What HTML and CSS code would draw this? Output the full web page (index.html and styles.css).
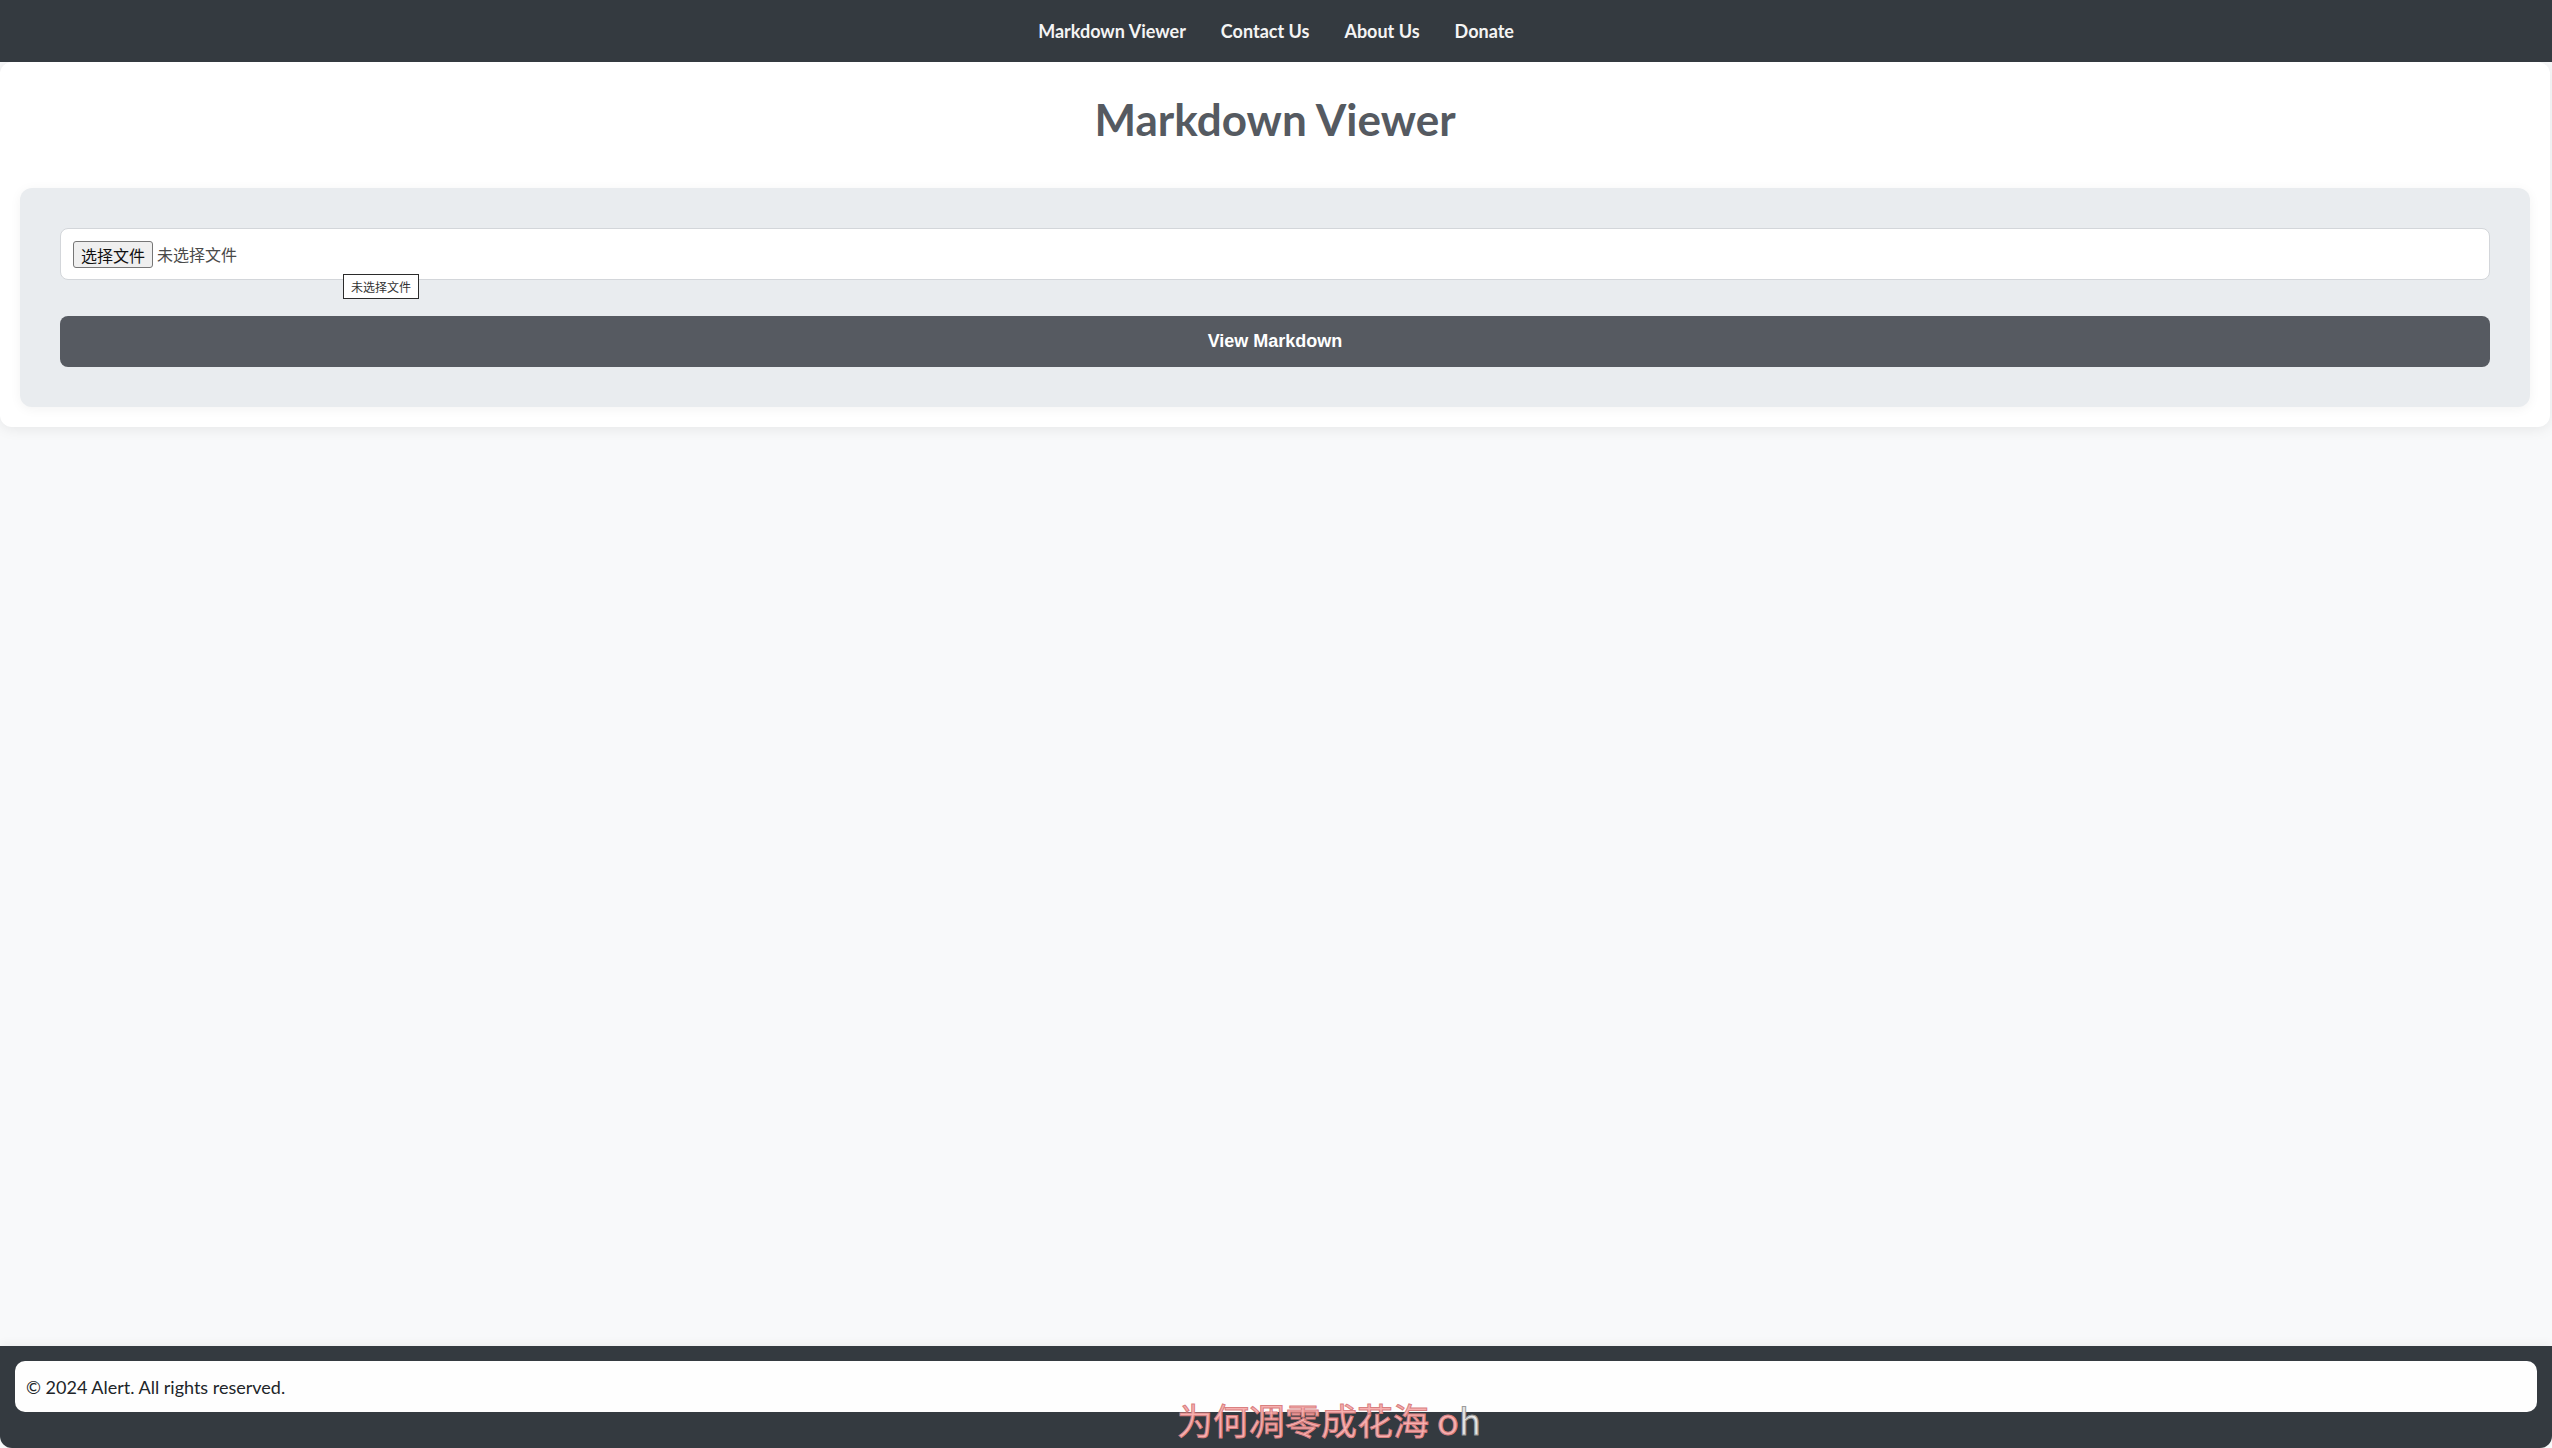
FILE: index.html
```html
<!DOCTYPE html>
<html lang="zh">
<head>
<meta charset="utf-8">
<title>Markdown Viewer</title>
<link rel="stylesheet" href="styles.css">
</head>
<body>
<nav class="navbar">
  <a class="nav-link" href="#">Markdown Viewer</a>
  <a class="nav-link" href="#">Contact Us</a>
  <a class="nav-link" href="#">About Us</a>
  <a class="nav-link" href="#">Donate</a>
</nav>
<main class="card">
  <h1 class="title">Markdown Viewer</h1>
  <section class="panel">
    <div class="file-input">
      <span class="file-btn">选择文件</span>
      <span class="file-name">未选择文件</span>
      <span class="tooltip">未选择文件</span>
    </div>
    <button class="view-btn" type="button">View Markdown</button>
  </section>
</main>
<div class="spacer"></div>
<footer class="footer">
  <div class="footer-box">© 2024 Alert. All rights reserved.</div>
</footer>
<div class="lyrics"><span class="lyric-done">为何凋零成花海 o</span><span class="lyric-todo">h</span></div>
</body>
</html>
```
FILE: styles.css
```css
html, body {
  margin: 0;
  padding: 0;
}
body {
  background: #f8f9fa;
  min-height: 100vh;
  display: flex;
  flex-direction: column;
  font-family: Lato, "Noto Sans", sans-serif;
  color: #212529;
  position: relative;
}
.navbar {
  height: 62px;
  background: #343a40;
  display: flex;
  justify-content: center;
  align-items: center;
  gap: 35px;
  position: relative;
  z-index: 2;
}
.nav-link {
  color: #f4f4f4;
  text-decoration: none;
  font-weight: 700;
  font-size: 18px;
  padding-bottom: 1px;
}
.card {
  background: #ffffff;
  border-radius: 12px;
  box-shadow: 0 2px 14px rgba(0, 0, 0, 0.08);
  padding: 31px 20px 20px;
  margin: 0 2px 0 0;
}
.title {
  margin: 0 0 42px;
  text-align: center;
  font-size: 44px;
  line-height: 53px;
  font-weight: 700;
  color: #555a61;
}
.panel {
  background: #e9ecef;
  border-radius: 12px;
  padding: 40px;
  display: flex;
  flex-direction: column;
  gap: 36px;
  box-shadow: 0 2px 12px rgba(0, 0, 0, 0.05);
}
.file-input {
  position: relative;
  height: 50px;
  background: #ffffff;
  border: 1px solid #d3d6da;
  border-radius: 8px;
  display: flex;
  align-items: center;
  padding: 0 12px;
  font-family: "Noto Sans CJK SC", sans-serif;
  font-size: 16px;
}
.file-btn {
  box-sizing: border-box;
  height: 27px;
  width: 80px;
  display: flex;
  align-items: center;
  justify-content: center;
  background: #efefef;
  border: 1px solid #767676;
  border-radius: 3px;
  color: #111;
  margin-top: 1px;
}
.file-name {
  margin-left: 4px;
  color: #4a4a4a;
}
.tooltip {
  position: absolute;
  left: 282px;
  top: 45px;
  box-sizing: border-box;
  width: 76px;
  height: 25px;
  border: 1px solid #2b2b2b;
  background: #ffffff;
  font-size: 12px;
  color: #333;
  display: flex;
  align-items: center;
  justify-content: center;
  z-index: 3;
}
.view-btn {
  height: 51px;
  border: none;
  border-radius: 8px;
  background: #565a61;
  color: #ffffff;
  font-family: "Liberation Sans", Arial, sans-serif;
  font-weight: 700;
  font-size: 18px;
  padding: 0;
}
.spacer {
  flex: 1;
}
.footer {
  background: #343a40;
  height: 102px;
  box-sizing: border-box;
  padding: 15px;
  border-radius: 0 0 12px 12px;
  box-shadow: 0 -3px 10px rgba(0, 0, 0, 0.04);
}
.footer-box {
  height: 51px;
  background: #fefefe;
  border-radius: 10px;
  display: flex;
  align-items: center;
  padding-left: 11px;
  font-size: 18px;
  color: #212529;
}
.lyrics {
  position: absolute;
  left: 1177px;
  top: 1396px;
  font-family: "Noto Sans CJK SC", sans-serif;
  font-size: 36px;
  line-height: 46px;
  white-space: pre;
  z-index: 5;
}
.lyric-done {
  color: #f7b0b0;
  -webkit-text-stroke: 1px #d98080;
}
.lyric-todo {
  color: #e6e6e6;
  -webkit-text-stroke: 1px #9a9a9a;
}
```
